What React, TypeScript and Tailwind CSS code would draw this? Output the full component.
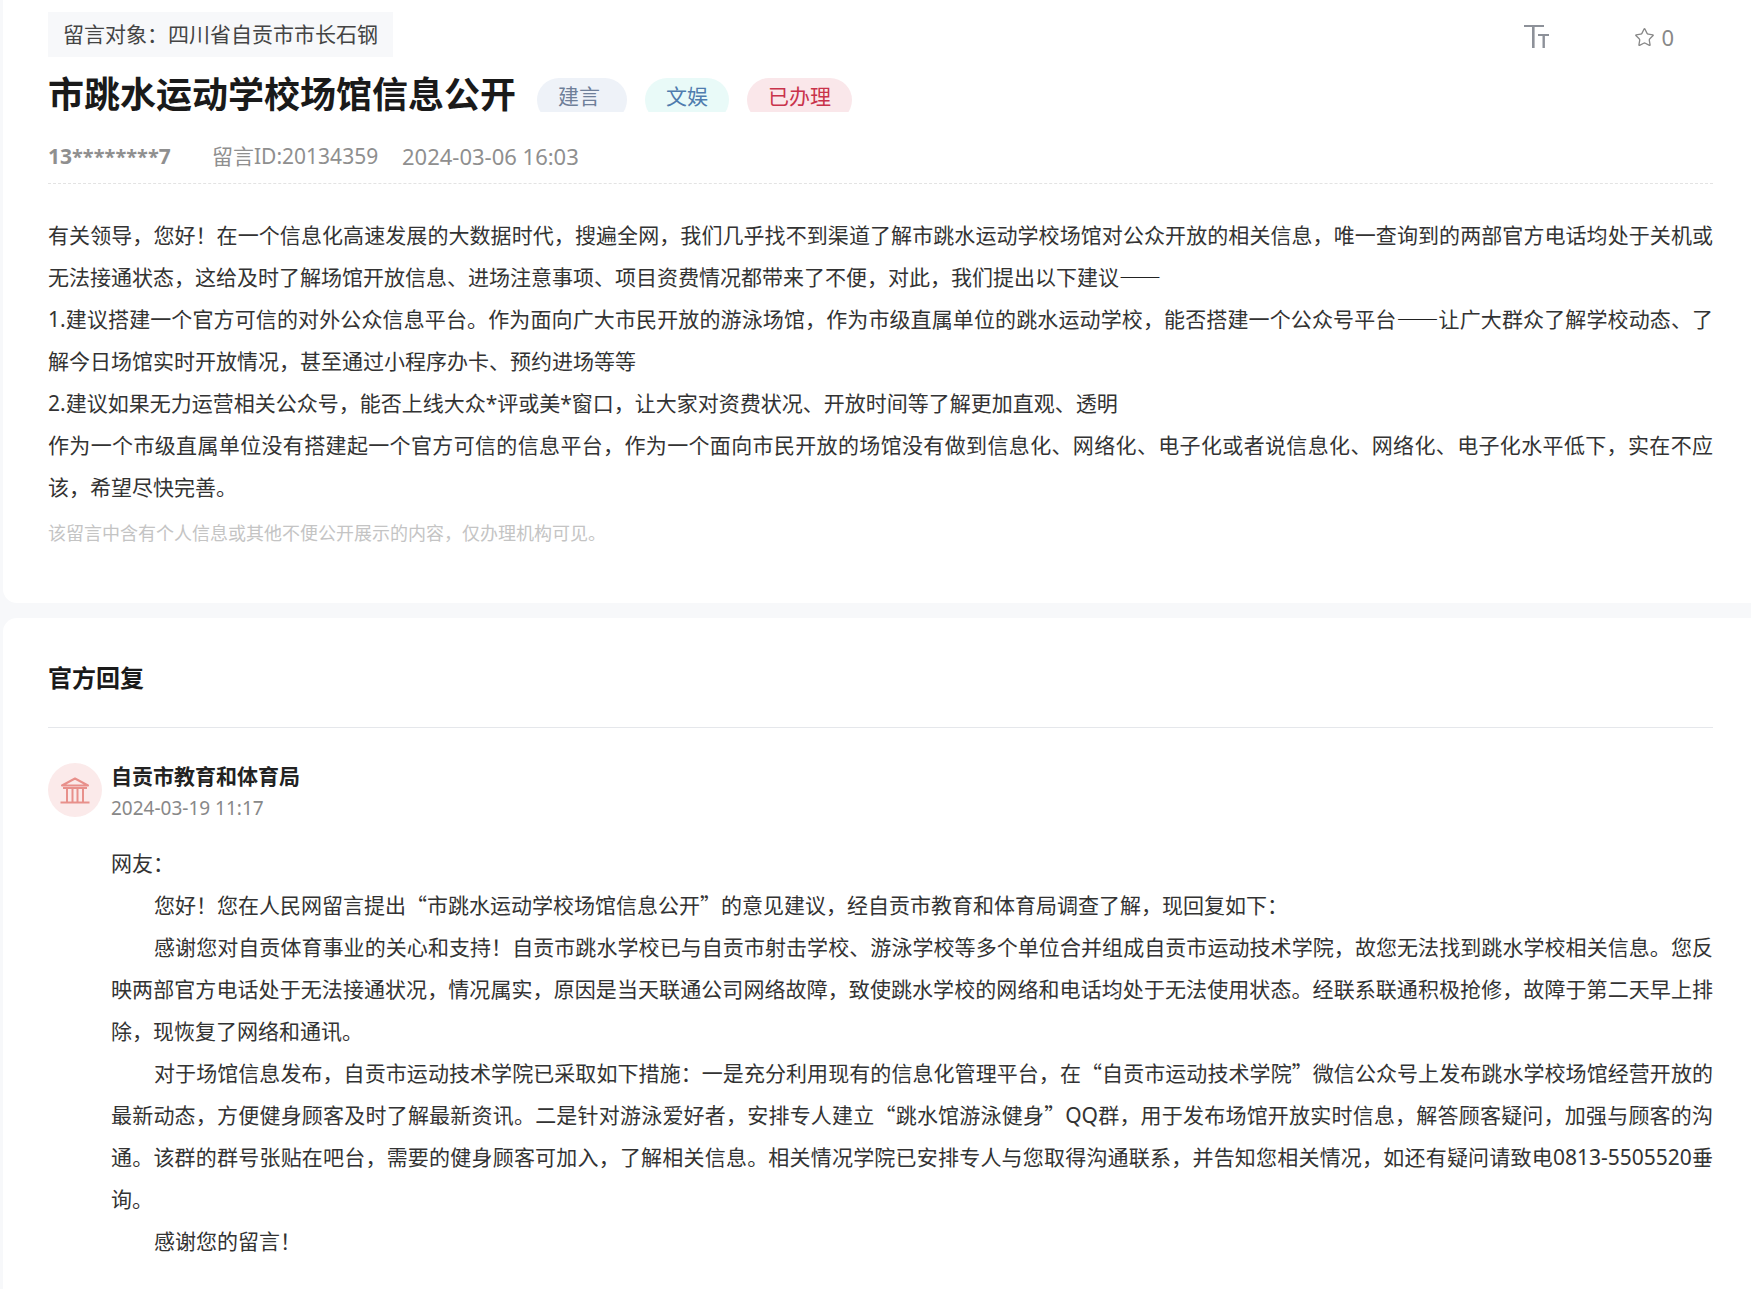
import type { ReactNode } from "react";
import { Star } from "lucide-react";

const cjk = "font-['Noto_Sans','Noto_Sans_CJK_SC',sans-serif]";

// quotes and dashes are full width in the picture, Noto Sans would make them narrow
const Wide = ({ children }: { children: ReactNode }) => (
  <span className="font-['Noto_Sans_CJK_SC',sans-serif] leading-none">{children}</span>
);

const Dash = () => (
  <span className="font-['Noto_Sans_CJK_SC',sans-serif] font-black leading-none text-[#222]">——</span>
);

const BankIcon = () => (
  <svg width="30" height="27" viewBox="0 0 30 27" fill="none" stroke="#e8908b" strokeWidth="2">
    <path d="M2 8.5 15 1.5l13 7z" strokeLinejoin="round" />
    <path d="M3 11h24M0.5 25.5h29" />
    <path d="M7 11v14M12.5 11v14M17.5 11v14M23 11v14" />
  </svg>
);

const FontSizeIcon = () => (
  <svg width="25" height="24" viewBox="0 0 25 24" fill="#8d9199">
    <rect x="0" y="0" width="20" height="2" />
    <rect x="8" y="0" width="2.6" height="23" />
    <rect x="14" y="9" width="11" height="2" />
    <rect x="18.5" y="9" width="2.4" height="14" />
  </svg>
);

const App = () => {
  return (
    <div lang="zh-CN" className={`${cjk} bg-[#f7f8fa] pl-[3px] min-h-[1289px] text-[21px] leading-[42px] text-[#333]`}>
      {/* Message */}
      <div className="bg-white rounded-bl-[14px] pl-[45px] pr-[38px] pt-[12px] h-[603px]">
        <div className="flex justify-between items-center h-[45px]">
          <div className="bg-[#f7f8fa] h-[45px] w-[345px] pl-[15px] leading-[45px] text-[#444]">
            留言对象：四川省自贡市市长石钢
          </div>
          <div className="flex items-center pt-[5px]">
            <FontSizeIcon />
            <div className="flex items-center gap-[6px] ml-[85px] mr-[39px] text-[22px] text-[#888]">
              <Star size={21} strokeWidth={1.5} color="#888" />
              <span>0</span>
            </div>
          </div>
        </div>

        <div className="flex items-start mt-[21px] h-[34px]">
          <h1 className="text-[36px] leading-[34px] font-bold text-[#1a1a1a] w-[489px] shrink-0">市跳水运动学校场馆信息公开</h1>
          <div className="w-[90px] h-[34px] overflow-hidden shrink-0">
            <div className="h-[44px] rounded-[22px] bg-[#eef2f8] text-[#6f7f99] text-[21px] leading-[36px] pl-[21px]">建言</div>
          </div>
          <div className="w-[84px] h-[34px] overflow-hidden ml-[18px] shrink-0">
            <div className="h-[44px] rounded-[22px] bg-[#e9faf8] text-[#4f7cae] text-[21px] leading-[36px] pl-[21px]">文娱</div>
          </div>
          <div className="w-[105px] h-[34px] overflow-hidden ml-[18px] shrink-0">
            <div className="h-[44px] rounded-[22px] bg-[#fae7ea] text-[#c9334b] text-[21px] leading-[36px] pl-[21px]">已办理</div>
          </div>
        </div>

        <div className="flex items-center h-[32px] mt-[28px] text-[#8f8f8f]">
          <span className="font-bold w-[164px]">13<span className="text-[20px]">********</span>7</span>
          <span className="w-[190px]">留言ID:20134359</span>
          <span className="text-[22px]">2024-03-06 16:03</span>
        </div>
        <div className="border-b border-dashed border-[#e3e3e3] mt-[11px]" />

        <div className="mt-[30px] text-justify">
          <p>有关领导，您好！在一个信息化高速发展的大数据时代，搜遍全网，我们几乎找不到渠道了解市跳水运动学校场馆对公众开放的相关信息，唯一查询到的两部官方电话均处于关机或无法接通状态，这给及时了解场馆开放信息、进场注意事项、项目资费情况都带来了不便，对此，我们提出以下建议<Dash /></p>
          <p>1.建议搭建一个官方可信的对外公众信息平台。作为面向广大市民开放的游泳场馆，作为市级直属单位的跳水运动学校，能否搭建一个公众号平台<Dash />让广大群众了解学校动态、了解今日场馆实时开放情况，甚至通过小程序办卡、预约进场等等</p>
          <p>2.建议如果无力运营相关公众号，能否上线大众*评或美*窗口，让大家对资费状况、开放时间等了解更加直观、透明</p>
          <p>作为一个市级直属单位没有搭建起一个官方可信的信息平台，作为一个面向市民开放的场馆没有做到信息化、网络化、电子化或者说信息化、网络化、电子化水平低下，实在不应该，希望尽快完善。</p>
        </div>
        <div className="text-[18px] leading-[30px] text-[#c4c4c4] mt-[10px]">该留言中含有个人信息或其他不便公开展示的内容，仅办理机构可见。</div>
      </div>

      {/* Reply */}
      <div className="bg-white rounded-tl-[14px] mt-[15px] pl-[45px] pr-[38px] h-[671px]">
        <div className="h-[110px] border-b border-[#e5e7eb] pt-[40px]">
          <h2 className="text-[24px] leading-[40px] font-bold text-[#1a1a1a]">官方回复</h2>
        </div>

        <div className="flex items-start mt-[35px] gap-[9px]">
          <div className="w-[54px] h-[54px] rounded-full bg-[#fbeaea] flex items-center justify-center shrink-0">
            <BankIcon />
          </div>
          <div className="-mt-[1px]">
            <div className="font-bold text-[#222] leading-[28px]">自贡市教育和体育局</div>
            <div className="text-[#888] text-[19px] leading-[30px] mt-[3px]">2024-03-19 11:17</div>
          </div>
        </div>

        <div className="pl-[63px] mt-[19px] text-justify">
          <p>网友：</p>
          <p className="indent-[43px]">您好！您在人民网留言提出<Wide>“</Wide>市跳水运动学校场馆信息公开<Wide>”</Wide>的意见建议，经自贡市教育和体育局调查了解，现回复如下：</p>
          <p className="indent-[43px]">感谢您对自贡体育事业的关心和支持！自贡市跳水学校已与自贡市射击学校、游泳学校等多个单位合并组成自贡市运动技术学院，故您无法找到跳水学校相关信息。您反映两部官方电话处于无法接通状况，情况属实，原因是当天联通公司网络故障，致使跳水学校的网络和电话均处于无法使用状态。经联系联通积极抢修，故障于第二天早上排除，现恢复了网络和通讯。</p>
          <p className="indent-[43px]">对于场馆信息发布，自贡市运动技术学院已采取如下措施：一是充分利用现有的信息化管理平台，在<Wide>“</Wide>自贡市运动技术学院<Wide>”</Wide>微信公众号上发布跳水学校场馆经营开放的最新动态，方便健身顾客及时了解最新资讯。二是针对游泳爱好者，安排专人建立<Wide>“</Wide>跳水馆游泳健身<Wide>”</Wide>QQ群，用于发布场馆开放实时信息，解答顾客疑问，加强与顾客的沟通。该群的群号张贴在吧台，需要的健身顾客可加入，了解相关信息。相关情况学院已安排专人与您取得沟通联系，并告知您相关情况，如还有疑问请致电0813-5505520垂询。</p>
          <p className="indent-[43px]">感谢您的留言！</p>
        </div>
      </div>
    </div>
  );
};

export default App;
